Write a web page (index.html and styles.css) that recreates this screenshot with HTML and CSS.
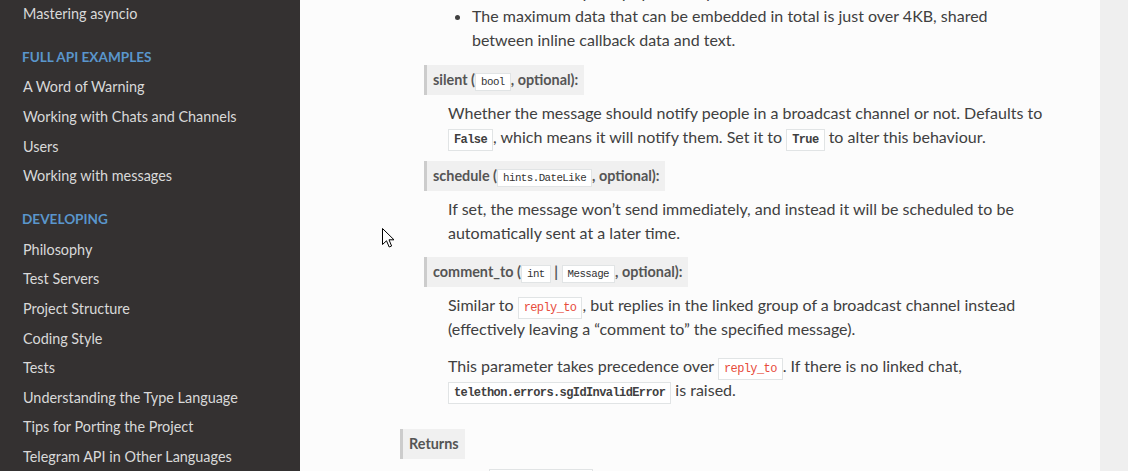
FILE: index.html
```html
<!DOCTYPE html>
<html>
<head>
    <title>Telethon documentation</title>
    <link rel="stylesheet" href="styles.css">
</head>
<body>
    <nav class="sidebar">
        <ul class="menu">
            <li><a href="#">Mastering asyncio</a></li>
        </ul>
        <p class="caption">Full API Examples</p>
        <ul class="menu">
            <li><a href="#">A Word of Warning</a></li>
            <li><a href="#">Working with Chats and Channels</a></li>
            <li><a href="#">Users</a></li>
            <li><a href="#">Working with messages</a></li>
        </ul>
        <p class="caption">Developing</p>
        <ul class="menu">
            <li><a href="#">Philosophy</a></li>
            <li><a href="#">Test Servers</a></li>
            <li><a href="#">Project Structure</a></li>
            <li><a href="#">Coding Style</a></li>
            <li><a href="#">Tests</a></li>
            <li><a href="#">Understanding the Type Language</a></li>
            <li><a href="#">Tips for Porting the Project</a></li>
            <li><a href="#">Telegram API in Other Languages</a></li>
        </ul>
    </nav>

    <main class="content">
        <dl class="fields">
            <dd>
                <dl class="params">
                    <dd>
                        <ul class="notes">
                            <li>Each button may carry up to 64 bytes of callback data.</li>
                            <li>The maximum data that can be embedded in total is just over 4KB, shared between inline callback data and text.</li>
                        </ul>
                    </dd>
                    <dt>silent (<code class="xref">bool</code>, optional):</dt>
                    <dd>
                        <p>Whether the message should notify people in a broadcast channel or not. Defaults to <code class="xref">False</code>, which means it will notify them. Set it to <code class="xref">True</code> to alter this behaviour.</p>
                    </dd>
                    <dt>schedule (<code class="xref">hints.DateLike</code>, optional):</dt>
                    <dd>
                        <p>If set, the message won’t send immediately, and instead it will be scheduled to be automatically sent at a later time.</p>
                    </dd>
                    <dt>comment_to (<code class="xref">int</code> | <code class="xref">Message</code>, optional):</dt>
                    <dd>
                        <p>Similar to <code>reply_to</code>, but replies in the linked group of a broadcast channel instead (effectively leaving a “comment to” the specified message).</p>
                        <p>This parameter takes precedence over <code>reply_to</code>. If there is no linked chat, <code class="xref">telethon.errors.sgIdInvalidError</code> is raised.</p>
                    </dd>
                </dl>
            </dd>
            <dt>Returns</dt>
            <dd>
                <p>The sent <code class="xref">custom.Message</code>.</p>
            </dd>
        </dl>
    </main>

    <svg class="cursor" width="14" height="21" viewBox="0 0 14 21">
        <path d="M0.5 0.5 L0.5 16.5 L4.5 12.8 L7.2 19 L9.6 18 L7 11.8 L12 11.8 Z" fill="#fff" stroke="#000" stroke-width="1"/>
    </svg>
</body>
</html>
```

FILE: styles.css
```css
body {
    margin: 0;
    padding: 0;
    display: flex;
    height: 471px;
    overflow: hidden;
    background-color: #efefef;
    font-family: Lato, "Open Sans", sans-serif;
    color: #404040;
}

/* sidebar */
.sidebar {
    width: 300px;
    flex-shrink: 0;
    background-color: #343131;
    margin-top: -1px;
}
.menu {
    list-style: none;
    margin: 0;
    padding: 0;
}
.menu li a {
    display: block;
    padding: 5.8px 23px;
    line-height: 18px;
    font-size: 14.4px;
    color: #d9d9d9;
    text-decoration: none;
}
.caption {
    margin: 12px 0 0;
    padding: 0 22px;
    height: 32px;
    line-height: 32px;
    font-size: 13.6px;
    font-weight: 700;
    text-transform: uppercase;
    color: #5a96cc;
    white-space: nowrap;
}

/* content */
.content {
    width: 800px;
    flex-shrink: 0;
    box-sizing: border-box;
    padding: 0 52px 0 100px;
    background-color: #fcfcfc;
    font-size: 16px;
    line-height: 24px;
}
.content dl {
    margin: 0;
}
.content dd {
    margin: 0 0 0 24px;
}
.params {
    margin-bottom: 27px !important;
}
.content dt {
    display: table;
    box-sizing: border-box;
    height: 30px;
    margin: 2px 0 6px;
    padding: 6px;
    border-left: 3px solid #ccc;
    background-color: #f0f0f0;
    color: #555;
    font-size: 14.4px;
    line-height: 18px;
    font-weight: 700;
}
.content p {
    margin: 0 0 12px;
}
.content p + p {
    margin-top: 13px;
}
.notes {
    margin: -20px 0 13px;
    padding-left: 24px;
    list-style: disc;
}

code {
    font-family: "Liberation Mono", "DejaVu Sans Mono", monospace;
    font-size: 0.75em;
    letter-spacing: -0.05em;
    line-height: 1;
    padding: 3px 5px;
    background-color: #fff;
    border: 1px solid #e1e4e5;
    color: #e74c3c;
    white-space: nowrap;
}
dt code {
    padding: 2px 5px;
}
code.xref {
    color: #404040;
    font-weight: 700;
}
dt code.xref {
    font-weight: 400;
    color: #333;
}

.cursor {
    position: absolute;
    left: 382px;
    top: 228px;
}
```
